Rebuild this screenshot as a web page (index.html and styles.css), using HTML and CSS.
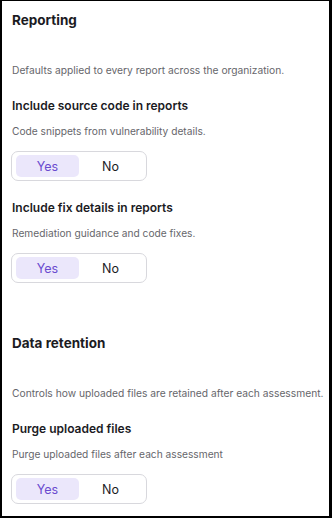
FILE: index.html
```html
<!DOCTYPE html>
<html lang="en">
<head>
  <meta charset="UTF-8" />
  <meta name="viewport" content="width=device-width, initial-scale=1.0"/>
  <title>Settings | Reporting</title>
  <link rel="stylesheet" href="styles.css">
</head>
<body>

  <main class="panel">
    <section class="group">
      <h2>Reporting</h2>
      <p class="group-desc">Defaults applied to every report across the organization.</p>

      <div class="setting">
        <h3>Include source code in reports</h3>
        <p class="hint">Code snippets from vulnerability details.</p>
        <div class="toggle">
          <button class="opt active">Yes</button>
          <button class="opt">No</button>
        </div>
      </div>

      <div class="setting">
        <h3>Include fix details in reports</h3>
        <p class="hint">Remediation guidance and code fixes.</p>
        <div class="toggle">
          <button class="opt active">Yes</button>
          <button class="opt">No</button>
        </div>
      </div>
    </section>

    <section class="group">
      <h2>Data retention</h2>
      <p class="group-desc">Controls how uploaded files are retained after each assessment.</p>

      <div class="setting">
        <h3>Purge uploaded files</h3>
        <p class="hint">Purge uploaded files after each assessment</p>
        <div class="toggle">
          <button class="opt active">Yes</button>
          <button class="opt">No</button>
        </div>
      </div>
    </section>
  </main>

</body>
</html>
```

FILE: styles.css
```css
* {
  box-sizing: border-box;
}

body {
  margin: 0;
  font-family: Inter, 'Noto Sans', sans-serif;
  color: #1b1b1f;
  background: #fff;
}

.panel {
  height: 518px;
  border: 2px solid #000;
  border-top-width: 1px;
  border-right-width: 3px;
  padding: 9px 6px 9px 10px;
  overflow: hidden;
}

.group + .group {
  margin-top: 50px;
}

h2 {
  margin: 0;
  font-size: 13.5px;
  line-height: 20px;
  font-weight: 700;
}

.group-desc {
  margin: 32px 0 19px;
  font-size: 10.25px;
  line-height: 16px;
  color: #66666b;
  white-space: nowrap;
}

.setting + .setting {
  margin-top: 18px;
}

h3 {
  margin: 0;
  font-size: 12px;
  line-height: 18px;
  font-weight: 600;
}

.hint {
  margin: 8px 0 12px;
  font-size: 10.2px;
  line-height: 16px;
  color: #66666b;
  white-space: nowrap;
}

.toggle {
  display: inline-flex;
  width: 136px;
  height: 30px;
  margin-left: -1px;
  padding: 3px 4px;
  border: 1px solid #d8d8dd;
  border-radius: 7px;
  background: #fff;
}

.opt {
  flex: 1;
  border: none;
  background: transparent;
  border-radius: 5px;
  font-family: inherit;
  font-size: 12.5px;
  color: #1b1b1f;
  padding: 0;
  cursor: pointer;
}

.opt.active {
  background: #ebe7fb;
  color: #6a4bcf;
}
```
